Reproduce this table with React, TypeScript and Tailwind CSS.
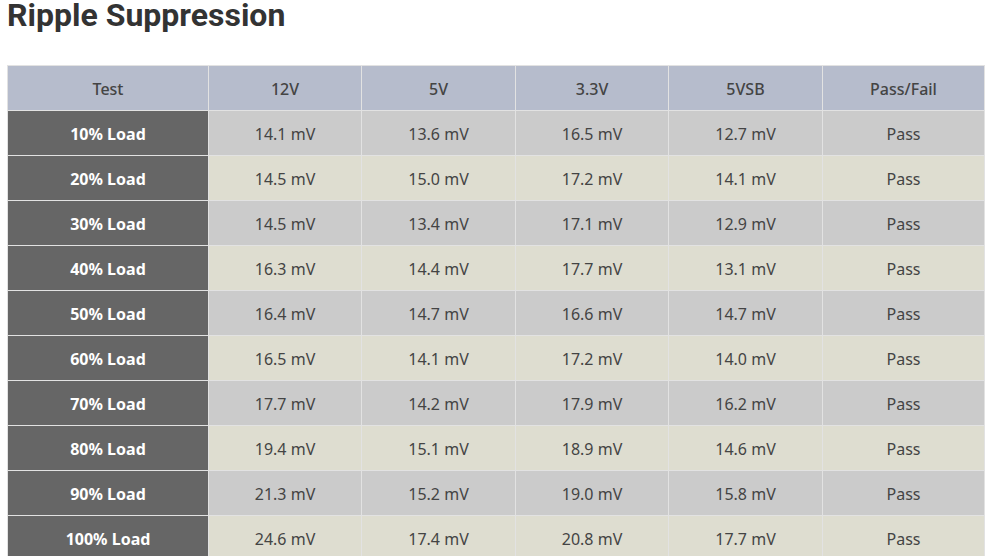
import React from "react";

const rows = [
  ["10% Load", "14.1 mV", "13.6 mV", "16.5 mV", "12.7 mV", "Pass"],
  ["20% Load", "14.5 mV", "15.0 mV", "17.2 mV", "14.1 mV", "Pass"],
  ["30% Load", "14.5 mV", "13.4 mV", "17.1 mV", "12.9 mV", "Pass"],
  ["40% Load", "16.3 mV", "14.4 mV", "17.7 mV", "13.1 mV", "Pass"],
  ["50% Load", "16.4 mV", "14.7 mV", "16.6 mV", "14.7 mV", "Pass"],
  ["60% Load", "16.5 mV", "14.1 mV", "17.2 mV", "14.0 mV", "Pass"],
  ["70% Load", "17.7 mV", "14.2 mV", "17.9 mV", "16.2 mV", "Pass"],
  ["80% Load", "19.4 mV", "15.1 mV", "18.9 mV", "14.6 mV", "Pass"],
  ["90% Load", "21.3 mV", "15.2 mV", "19.0 mV", "15.8 mV", "Pass"],
  ["100% Load", "24.6 mV", "17.4 mV", "20.8 mV", "17.7 mV", "Pass"],
];

const headers = ["Test", "12V", "5V", "3.3V", "5VSB", "Pass/Fail"];
const widths = ["w-[201px]", "w-[153px]", "w-[154px]", "w-[153px]", "w-[154px]", "w-[162px]"];

export default function App() {
  return (
    <div className="bg-white w-[997px] h-[556px] overflow-hidden">
      <h2
        className="pl-[7px] text-[32px] font-bold leading-[30px] text-[#333] h-[65px]"
        style={{ fontFamily: "Roboto, sans-serif" }}
      >
        Ripple Suppression
      </h2>
      <div className="pl-[7px]">
        <table
          className="border-collapse table-fixed w-[977px] text-[#444]"
          style={{ fontFamily: "'Noto Sans', sans-serif" }}
        >
          <thead>
            <tr className="h-[45px] bg-[#b6bccc]">
              {headers.map((h, i) => (
                <th
                  key={h}
                  className={`${widths[i]} pt-[1px] font-medium border border-[#e2e2e2] text-center text-[16px] text-[#444]`}
                >
                  {h}
                </th>
              ))}
            </tr>
          </thead>
          <tbody>
            {rows.map((r, ri) => (
              <tr key={ri} className={`h-[45px] ${ri % 2 === 0 ? "bg-[#cbcbcb]" : "bg-[#deddd0]"}`}>
                {r.map((c, ci) =>
                  ci === 0 ? (
                    <td
                      key={ci}
                      className="bg-[#666666] pt-[1px] text-white font-bold text-[16px] text-center border border-[#e2e2e2]"
                    >
                      {c}
                    </td>
                  ) : (
                    <td key={ci} className="pt-[1px] text-center border border-[#e2e2e2] text-[16px]">
                      {c}
                    </td>
                  )
                )}
              </tr>
            ))}
          </tbody>
        </table>
      </div>
    </div>
  );
}
